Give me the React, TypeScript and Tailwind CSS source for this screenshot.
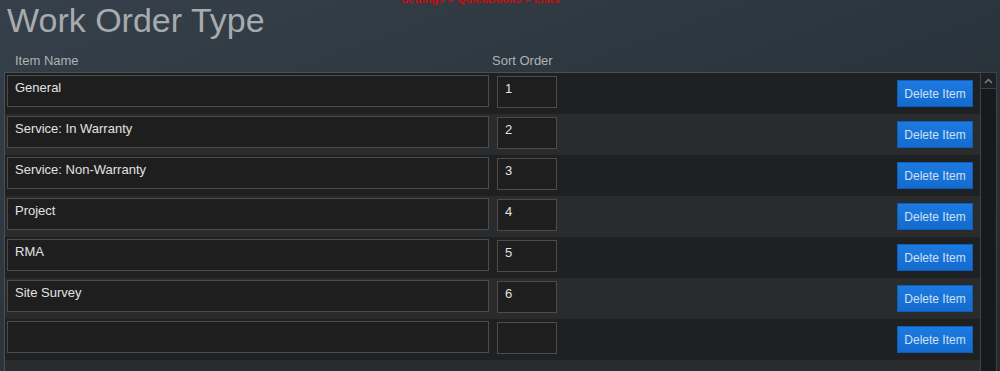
import React from "react";

const rows = [
  { name: "General", order: "1" },
  { name: "Service: In Warranty", order: "2" },
  { name: "Service: Non-Warranty", order: "3" },
  { name: "Project", order: "4" },
  { name: "RMA", order: "5" },
  { name: "Site Survey", order: "6" },
  { name: "", order: "" },
];

export default function App() {
  return (
    <div
      className="relative w-[1000px] h-[371px] overflow-hidden bg-[linear-gradient(160deg,#35404a_0%,#2c363e_45%,#222a30_100%)]"
      style={{ fontFamily: '"Liberation Sans", Arial, sans-serif' }}
    >
      <div className="absolute left-[401px] top-[-8px] text-[11px] font-bold text-[#d10a0a] leading-[14px]">
        Settings &gt; QuickBooks &gt; Lists
      </div>
      <h1 className="pl-[7px] pt-[1px] text-[34px] leading-[38px] text-[#a7abae]">Work Order Type</h1>
      <div className="flex h-[33px] items-end pb-[4px] text-[13px] leading-[15px] text-[#aeb2b5]">
        <div className="w-[492px] pl-[15px]">Item Name</div>
        <div>Sort Order</div>
      </div>
      <div className="flex ml-[4px] w-[993px] h-[300px]">
        <div className="flex-1 border-t border-l border-[#4b5054] flex flex-col">
          {rows.map((r, i) => (
            <div
              key={i}
              className={`flex h-[41px] shrink-0 items-start ${i % 2 === 0 ? "bg-[#1f2021]" : "bg-[#292b2d]"}`}
            >
              <div className="ml-[2px] mt-[2px] w-[482px] h-[32px] border border-[#4a4c4e] bg-[#1e1e1f] pl-[7px] pt-[4px] text-[13px] leading-[15px] text-[#e2e2e2]">
                {r.name}
              </div>
              <div className="ml-[8px] mt-[3px] w-[60px] h-[32px] border border-[#4a4c4e] bg-[#1e1e1f] pl-[7px] pt-[4px] text-[13px] leading-[15px] text-[#e2e2e2]">
                {r.order}
              </div>
              <div className="flex-1" />
              <button className="mr-[7px] mt-[7px] w-[76px] h-[27px] bg-[linear-gradient(#1d7ae0,#136bcf)] border border-[#0f5db8] text-[12px] text-[#cfe0f4]">
                Delete Item
              </button>
            </div>
          ))}
          <div className="flex-1 bg-[#292b2d]" />
        </div>
        <div className="w-[17px] border border-[#3e4347] bg-[#161a1d] flex flex-col">
          <div className="h-[16px] border-b border-[#3e4347] bg-[#1d2125] flex items-center justify-center">
            <svg width="9" height="6" viewBox="0 0 9 6">
              <path d="M1 5 L4.5 1.5 L8 5" fill="none" stroke="#7b8085" strokeWidth="1.5" />
            </svg>
          </div>
        </div>
      </div>
    </div>
  );
}
